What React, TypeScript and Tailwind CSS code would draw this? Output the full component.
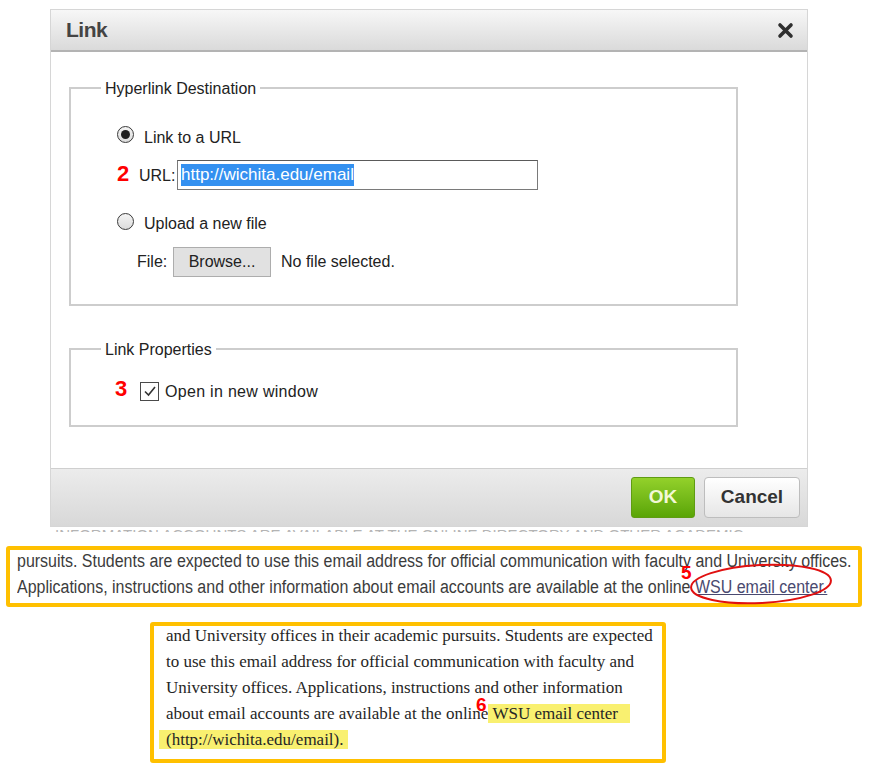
import React from "react";

// Link dialog screenshot + two highlighted text excerpts below it
const Radio = ({ checked }: { checked?: boolean }) => (
  <span className="flex items-center justify-center w-[17px] h-[17px] rounded-full border-[1.5px] border-[#3a3a3a] bg-gradient-to-b from-[#f4f4f4] to-[#dcdcdc]">
    {checked && <span className="w-[9px] h-[9px] rounded-full bg-[#1f1f1f]" />}
  </span>
);

const App: React.FC = () => {
  return (
    <div className="w-[884px] h-[770px] bg-white overflow-hidden text-[#222] font-['Liberation_Sans',Arial,sans-serif]">
      {/* Dialog */}
      <div className="ml-[50px] mt-[9px] w-[758px] border border-[#d6d6d6]">
        {/* Title bar */}
        <div className="h-[42px] flex items-center justify-between pl-[15px] pr-[13px] bg-gradient-to-b from-[#f7f7f7] to-[#dadada] border-b-2 border-[#b3b3b3]">
          <span className="text-[21px] font-bold text-[#444] tracking-[-0.5px]">Link</span>
          <svg width="17" height="17" viewBox="0 0 17 17">
            <path d="M3 3 L14 14 M14 3 L3 14" stroke="#2f2f2f" strokeWidth="3.6" strokeLinecap="round" />
          </svg>
        </div>

        {/* Body */}
        <div className="h-[416px] bg-white pt-[26px] pl-[18px] text-[16px]">
          <fieldset className="w-[669px] border-2 border-[#cdcdcd] px-0 pt-[24px] pb-[27px]">
            <legend className="ml-[30px] px-[4px] leading-[20px] translate-y-[1px]">Hyperlink Destination</legend>
            <div className="h-[24px] flex items-center ml-[46px]">
              <Radio checked />
              <span className="ml-[10px] translate-y-[4px]">Link to a URL</span>
            </div>
            <div className="h-[31px] mt-[13px] flex items-center ml-[46px]">
              <span className="w-[22px] text-[22px] font-bold text-[#ff0000] leading-none -mt-[2px]">2</span>
              <span className="w-[38px] translate-y-[1px]">URL:</span>
              <div className="w-[361px] h-[30px] border border-[#7a7a7a] border-t-[#5a5a5a] bg-white flex items-center pl-[3px]">
                <span className="bg-[#3390f0] text-white text-[17px] leading-[22px]">http://wichita.edu/email</span>
              </div>
            </div>
            <div className="h-[24px] mt-[19px] flex items-center ml-[46px]">
              <Radio />
              <span className="ml-[10px] translate-y-[3px]">Upload a new file</span>
            </div>
            <div className="h-[30px] mt-[14px] flex items-center ml-[66px]">
              <span className="w-[36px]">File:</span>
              <span className="w-[98px] h-[30px] flex items-center justify-center bg-[#e1e1e1] border border-[#adadad]">
                Browse...
              </span>
              <span className="ml-[10px]">No file selected.</span>
            </div>
          </fieldset>

          <fieldset className="mt-[33px] w-[669px] border-2 border-[#cdcdcd] px-0 pt-[20px] pb-[22px]">
            <legend className="ml-[30px] px-[4px] leading-[20px] translate-y-[1px]">Link Properties</legend>
            <div className="h-[24px] flex items-center ml-[44px]">
              <span className="w-[25px] text-[22px] font-bold text-[#ff0000] leading-none -mt-[4px]">3</span>
              <span className="w-[19px] h-[19px] border-[1.5px] border-[#4a4a4a] bg-white flex items-center justify-center">
                <svg width="14" height="14" viewBox="0 0 14 14">
                  <path d="M2 7.5 L5.5 11 L12 3" fill="none" stroke="#333" strokeWidth="1.6" />
                </svg>
              </span>
              <span className="ml-[6px] tracking-[0.3px] translate-y-[1px]">Open in new window</span>
            </div>
          </fieldset>
        </div>

        {/* Footer */}
        <div className="h-[58px] border-t border-[#cfcfcf] bg-gradient-to-b from-[#ececec] to-[#d8d8d8] flex items-center justify-end gap-[9px] pr-[7px]">
          <button className="w-[64px] h-[41px] rounded-[3px] border border-[#5f9c12] bg-gradient-to-b from-[#93d12a] to-[#5aa505] text-[#f3f8d6] text-[19px] font-bold">
            OK
          </button>
          <button className="w-[96px] h-[41px] rounded-[4px] border border-[#bdbdbd] bg-gradient-to-b from-[#ffffff] to-[#e6e6e6] text-[#333] text-[19px] font-bold">
            Cancel
          </button>
        </div>
      </div>

      {/* clipped text under the dialog */}
      <div className="ml-[55px] w-[750px] h-[5px] overflow-hidden text-[15px] leading-[15px] text-[#b4b4b4] whitespace-nowrap">
        <div>INFORMATION ACCOUNTS ARE AVAILABLE AT THE ONLINE DIRECTORY AND OTHER ACADEMIC</div>
      </div>

      {/* Excerpt 1 */}
      <div className="relative ml-[6px] mt-[14px] w-[856px] h-[61px] border-[4px] border-[#ffc000] rounded-[3px] bg-white overflow-hidden pl-[7px] text-[18px] leading-[26px] text-[#3c3c3c] whitespace-nowrap">
        <div className="origin-left scale-x-[0.888] -mt-[2px]">
          <div>pursuits. Students are expected to use this email address for official communication with faculty and University offices.</div>
          <div>
            Applications, instructions and other information about email accounts are available at the online{" "}
            <span className="underline text-[#4a4a70]">WSU email center.</span>
          </div>
        </div>
      </div>
      {/* annotation over excerpt 1 */}
      <div className="relative h-0">
        <span className="absolute left-[681px] top-[-44px] text-[19px] leading-none font-bold text-[#ff0000]">5</span>
        <svg className="absolute left-[689px] top-[-45px]" width="146" height="44" viewBox="0 0 146 44">
          <ellipse cx="72" cy="22" rx="70" ry="19" fill="none" stroke="#e01010" strokeWidth="2" transform="rotate(-3 72 22)" />
        </svg>
      </div>

      {/* Excerpt 2 */}
      <div className="relative ml-[150px] mt-[15px] w-[516px] h-[141px] border-[4px] border-[#ffc000] rounded-[3px] bg-white pl-[12px] text-[17px] leading-[26px] text-[#262626] whitespace-nowrap font-['Liberation_Serif','Times_New_Roman',serif]">
        <div className="-mt-[3px]">
          <div>and University offices in their academic pursuits. Students are expected</div>
          <div>to use this email address for official communication with faculty and</div>
          <div>University offices. Applications, instructions and other information</div>
          <div>
            about email accounts are available at the online
            <span className="bg-[#f9f070] pl-[4px] pr-[12px]">WSU email center</span>
          </div>
          <div className="-ml-[7px]">
            <span className="bg-[#f9f070] pl-[7px] pr-[4px]">(http://wichita.edu/email).</span>
          </div>
        </div>
        <span className="absolute left-[322px] top-[69px] text-[19px] leading-none font-bold text-[#ff0000] font-['Liberation_Sans',sans-serif]">6</span>
      </div>
    </div>
  );
};

export default App;
